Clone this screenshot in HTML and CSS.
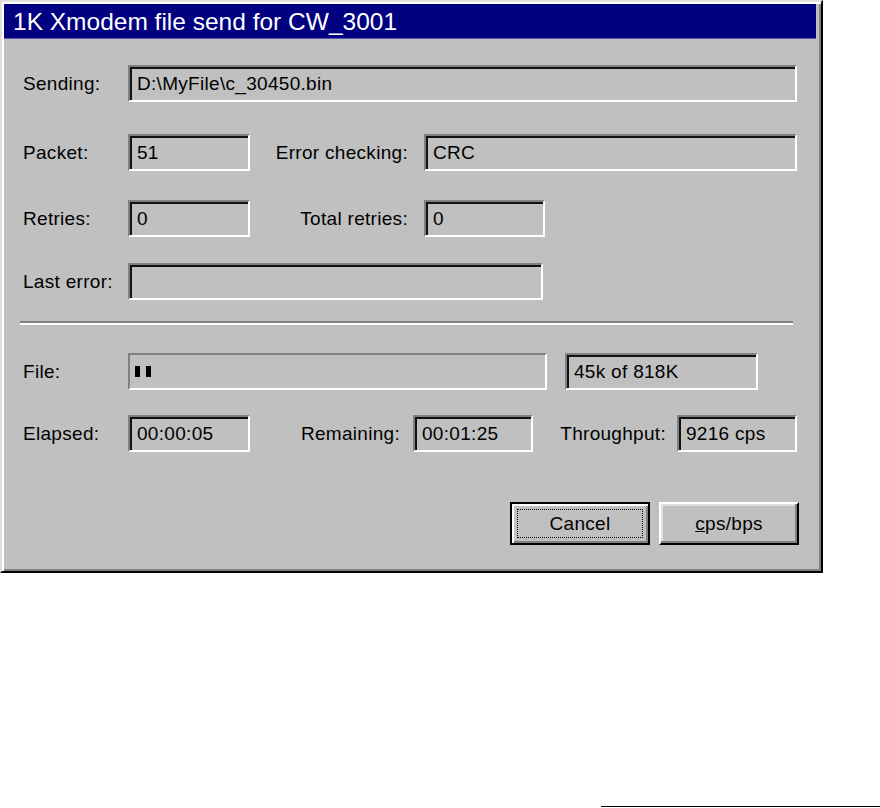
FILE: index.html
```html
<!DOCTYPE html>
<html lang="en">
<head>
  <meta charset="UTF-8">
  <title>1K Xmodem file send for CW_3001</title>
  <link rel="stylesheet" href="styles.css">
</head>
<body>
<div class="dialog">
  <div class="titlebar">1K Xmodem file send for CW_3001</div>
  <div class="content">
    <div class="row row-sending">
      <span class="label">Sending:</span>
      <div class="field w-sending">D:\MyFile\c_30450.bin</div>
    </div>
    <div class="row row-packet">
      <span class="label">Packet:</span>
      <div class="field w-small">51</div>
      <span class="label2">Error checking:</span>
      <div class="field w-check">CRC</div>
    </div>
    <div class="row row-retries">
      <span class="label">Retries:</span>
      <div class="field w-small">0</div>
      <span class="label2">Total retries:</span>
      <div class="field w-total">0</div>
    </div>
    <div class="row row-error">
      <span class="label">Last error:</span>
      <div class="field w-error"></div>
    </div>
    <div class="separator"></div>
    <div class="row row-file">
      <span class="label">File:</span>
      <div class="progress">
        <span class="block"></span>
        <span class="block"></span>
      </div>
      <div class="field w-count">45k of 818K</div>
    </div>
    <div class="row row-elapsed">
      <span class="label">Elapsed:</span>
      <div class="field w-small">00:00:05</div>
      <span class="label3">Remaining:</span>
      <div class="field w-time">00:01:25</div>
      <span class="label4">Throughput:</span>
      <div class="field w-time">9216 cps</div>
    </div>
    <div class="buttons">
      <button class="btn btn-default"><span class="focus">Cancel</span></button>
      <button class="btn"><span class="inner"><u>c</u>ps/bps</span></button>
    </div>
  </div>
</div>
<div class="baseline"></div>
</body>
</html>
```

FILE: styles.css
```css
html, body { margin: 0; background: #fff; }
body { font-family: "Liberation Sans", Arial, sans-serif; color: #000; }

.dialog { box-sizing: border-box; width: 823px; height: 573px; padding: 2px 5px 0 2px; background: #c0c0c0; border: 2px solid; border-color: #dfdfdf #000 #000 #dfdfdf; box-shadow: inset 2px 2px #fff, inset -2px -2px #808080; }
.titlebar { height: 35px; line-height: 35px; padding-left: 9px; background: #000080; color: #fff; font-size: 24.5px; border-bottom: 1px solid #5a5ab0; box-sizing: border-box; white-space: nowrap; }

.content { padding-left: 19px; font-size: 19px; letter-spacing: 0.3px; }
.row { display: flex; align-items: center; height: 37px; }
.row-sending { margin-top: 26px; }
.row-packet { margin-top: 32px; }
.row-retries { margin-top: 29px; }
.row-error { margin-top: 26px; }
.row-file { margin-top: 28px; }
.row-elapsed { margin-top: 25px; }

.label { width: 105px; flex: none; }
.label2 { width: 158px; padding-right: 16px; text-align: right; flex: none; }
.label3 { width: 150px; padding-right: 13px; text-align: right; flex: none; }
.label4 { width: 133px; padding-right: 11px; text-align: right; flex: none; }

.field { box-sizing: border-box; height: 37px; line-height: 33px; padding-left: 7px; border: 2px solid; border-color: #808080 #fff #fff #808080; box-shadow: inset 2px 2px #111; white-space: nowrap; overflow: hidden; flex: none; }
.w-sending { width: 669px; }
.w-small { width: 122px; }
.w-check { width: 373px; }
.w-total { width: 121px; }
.w-error { width: 415px; }
.w-count { width: 193px; margin-left: 18px; }
.w-time { width: 120px; }

.progress { box-sizing: border-box; width: 419px; height: 37px; display: flex; align-items: center; gap: 6px; padding-left: 5px; border: 2px solid; border-color: #808080 #fff #fff #808080; flex: none; }
.block { width: 5px; height: 11px; background: #000; }

.separator { margin: 21px 0 0 -3px; width: 773px; border-top: 2px solid #808080; border-bottom: 2px solid #fff; }

.buttons { display: flex; justify-content: flex-end; gap: 9px; margin: 50px 17px 0 0; }
.btn { box-sizing: border-box; width: 140px; height: 43px; padding: 0; background: #c0c0c0; font: inherit; letter-spacing: inherit; color: #000; border: 2px solid; border-color: #fff #000 #000 #fff; box-shadow: inset -2px -2px #808080, inset 2px 2px #dfdfdf; }
.btn .inner { display: block; line-height: 39px; }
.btn-default { padding: 5px; border: 2px solid #000; box-shadow: inset 2px 2px #fff, inset -2px -2px #808080; }
.btn-default .focus { display: block; height: 100%; box-sizing: border-box; line-height: 27px; border: 1px dotted #000; }

.baseline { margin: 233px 0 0 601px; width: 279px; height: 1px; background: #000; }
```
